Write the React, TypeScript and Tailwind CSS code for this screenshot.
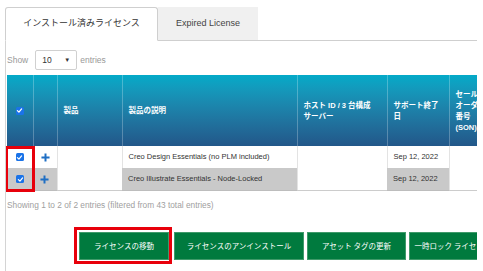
import React from 'react';

const latin = { fontFamily: '"Liberation Sans", "Noto Sans CJK JP", sans-serif' };

const Check = () => (
  <span className="inline-flex w-[8px] h-[8px] rounded-[1.5px] bg-[#1a73e8] items-center justify-center align-middle">
    <svg viewBox="0 0 10 10" className="w-[7px] h-[7px]">
      <path d="M2 5.2 L4.2 7.3 L8 2.8" fill="none" stroke="#fff" strokeWidth="1.8" strokeLinecap="round" strokeLinejoin="round" />
    </svg>
  </span>
);

const Plus = () => (
  <svg viewBox="0 0 10 10" className="w-[9px] h-[9px] inline-block">
    <path d="M5 0.5 V9.5 M0.5 5 H9.5" stroke="#1f6fc4" strokeWidth="2.2" />
  </svg>
);

const headers = ['', '', '製品', '製品の説明', 'ホスト ID / 3 台構成\nサーバー', 'サポート終了\n日', 'セールス\nオーダー\n番号\n(SON)'];
const widths = [26, 24, 65, 175, 90, 62, 60];

const buttons = ['ライセンスの移動', 'ライセンスのアンインストール', 'アセット タグの更新', '一時ロック ライセンスの解除'];
const btnWidths = [90, 130, 99, 110];

export default function App() {
  return (
    <div className="w-[483px] h-[271px] overflow-hidden bg-white text-[#333]" style={latin}>
      <div className="ml-[5px] w-[472px] h-full pt-[7px] flex flex-col">
        {/* Tabs */}
        <div className="flex h-[34px] border-b border-[#cfcfcf] shrink-0">
          <div className="w-[153px] -mb-px bg-white border border-[#cfcfcf] border-b-white rounded-t-[3px] flex items-center justify-center text-[9px] text-[#333]">
            インストール済みライセンス
          </div>
          <div className="w-[100px] bg-[#f0f0f0] flex items-center justify-center text-[9px] font-normal text-[#444]">
            Expired License
          </div>
        </div>

        {/* Panel */}
        <div className="flex-1 border-l border-[#d4d4d4] overflow-hidden">
          <div className="flex items-center mt-[9px] h-[20px] pl-px text-[8.5px] text-[#999]">
            <span>Show</span>
            <div className="ml-[7px] w-[42px] h-[20px] border border-[#d0d0d0] rounded-[2px] flex items-center justify-between px-[6px] text-[#333]">
              <span>10</span>
              <span className="text-[6px]">▼</span>
            </div>
            <span className="ml-[3px]">entries</span>
          </div>

          <div className="relative mt-[5px] ml-px">
            <table className="table-fixed border-collapse" style={{ width: widths.reduce((a, b) => a + b, 0) }}>
              <colgroup>
                {widths.map((w, i) => (
                  <col key={i} style={{ width: w }} />
                ))}
              </colgroup>
              <thead>
                <tr className="h-[71px] bg-gradient-to-b from-[#03aac8] to-[#225789]">
                  {headers.map((h, i) => (
                    <th
                      key={i}
                      className={`align-middle text-left font-bold text-white text-[7.5px] leading-[11px] whitespace-pre pl-[6px] ${i > 0 ? 'border-l border-white/25' : ''}`}
                    >
                      {i === 0 ? (
                        <div className="flex justify-center -ml-[6px]">
                          <Check />
                        </div>
                      ) : (
                        h
                      )}
                    </th>
                  ))}
                </tr>
              </thead>
              <tbody className="text-[7.5px] text-[#333]">
                <tr className="h-[22px]">
                  <td className="text-center">
                    <Check />
                  </td>
                  <td className="text-center border-l border-[#e3e3e3]">
                    <Plus />
                  </td>
                  <td rowSpan={2} className="border-l border-[#e3e3e3] border-b border-b-[#cccccc]"></td>
                  <td className="pl-[6px] border-l border-[#e3e3e3] whitespace-nowrap">Creo Design Essentials (no PLM included)</td>
                  <td rowSpan={2} className="border-l border-[#e3e3e3] border-b border-b-[#cccccc]"></td>
                  <td className="pl-[6px] border-l border-[#e3e3e3] whitespace-nowrap">Sep 12, 2022</td>
                  <td rowSpan={2} className="border-l border-[#e3e3e3] border-b border-b-[#cccccc]"></td>
                </tr>
                <tr className="h-[22px] bg-[#c9c9c9] border-b border-[#bdbdbd]">
                  <td className="text-center bg-[#c9c9c9]">
                    <Check />
                  </td>
                  <td className="text-center bg-[#c9c9c9]">
                    <Plus />
                  </td>
                  <td className="pl-[6px] bg-[#c9c9c9] whitespace-nowrap">Creo Illustrate Essentials - Node-Locked</td>
                  <td className="pl-[6px] bg-[#c9c9c9] whitespace-nowrap">Sep 12, 2022</td>
                </tr>
              </tbody>
            </table>
            {/* highlight around checkboxes */}
            <div className="absolute left-[-2px] top-[71px] w-[30px] h-[46px] border-[3px] border-[#e8000b]"></div>
          </div>

          <div className="mt-[8px] pl-px text-[8.3px] text-[#a0a0a0] leading-[12px]">
            Showing 1 to 2 of 2 entries (filtered from 43 total entries)
          </div>

          <div className="flex mt-[21px] ml-[73px] gap-[3px]" style={{ fontFamily: '"Noto Sans CJK JP", sans-serif' }}>
            {buttons.map((b, i) => (
              <div key={i} className={`relative shrink-0 ${i === 1 ? 'ml-[2px]' : ''}`}>
                <div
                  className="h-[28px] bg-[#007a3e] border border-[#3f9a6a] text-white text-[7.5px] flex items-center justify-center whitespace-nowrap overflow-hidden"
                  style={{ width: btnWidths[i] }}
                >
                  {b}
                </div>
                {i === 0 && (
                  <div className="absolute -left-[5px] -top-[5px] -right-[3px] -bottom-[4px] border-[3px] border-[#e8000b]"></div>
                )}
              </div>
            ))}
          </div>
        </div>
      </div>
    </div>
  );
}
